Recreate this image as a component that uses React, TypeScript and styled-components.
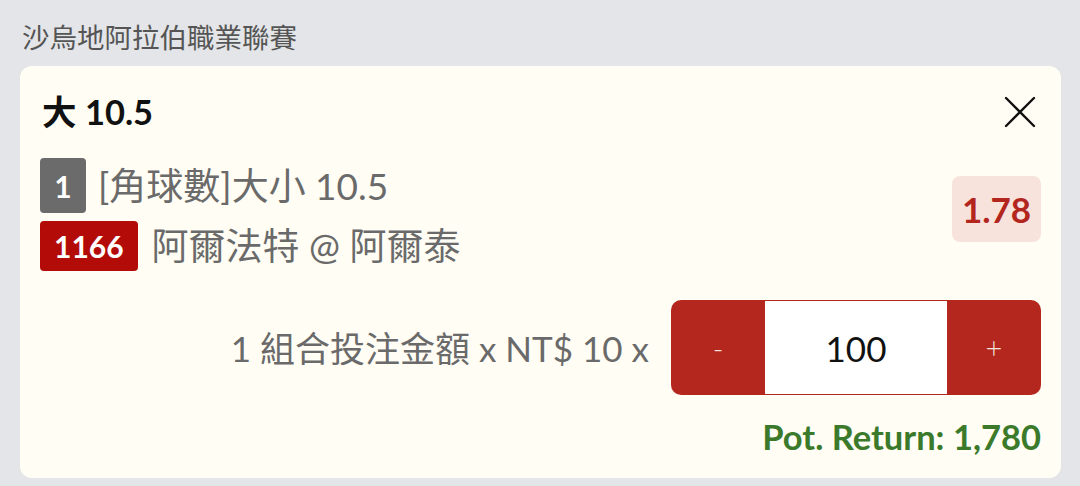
import React from "react";
import styled, { createGlobalStyle } from "styled-components";

const GlobalStyle = createGlobalStyle`
  html, body {
    margin: 0;
    padding: 0;
    background: #e4e5e8;
  }
  body {
    font-family: Lato, "Noto Sans CJK TC", sans-serif;
  }
`;

const Page = styled.div`
  width: 1080px;
  height: 486px;
  box-sizing: border-box;
  padding: 18px 19px 0 20px;
  display: flex;
  flex-direction: column;
  overflow: hidden;
`;

const League = styled.div`
  font-size: 27.5px;
  line-height: 40px;
  color: #555555;
  padding-left: 2px;
  margin-bottom: 8px;
`;

const Card = styled.div`
  background: #fffdf4;
  border-radius: 12px;
  padding: 26px 20px 21px 20px;
  display: flex;
  flex-direction: column;
`;

const TitleRow = styled.div`
  display: flex;
  align-items: center;
  justify-content: space-between;
  height: 40px;
`;

const Title = styled.div`
  font-size: 34.5px;
  line-height: 40px;
  font-weight: 700;
  color: #111111;
  padding-left: 2px;
`;

const CloseButton = styled.button`
  width: 32px;
  height: 32px;
  padding: 0;
  border: none;
  background: transparent;
  display: flex;
  align-items: center;
  justify-content: center;
  margin-right: 5px;
  cursor: pointer;
`;

const Selection = styled.div`
  display: flex;
  align-items: center;
  justify-content: space-between;
  margin-top: 26px;
`;

const Lines = styled.div`
  display: flex;
  flex-direction: column;
  gap: 8px;
`;

const Line = styled.div`
  display: flex;
  align-items: center;
  gap: 12px;
`;

const Badge = styled.span<{ $tone: "gray" | "red" }>`
  display: inline-flex;
  align-items: center;
  justify-content: center;
  box-sizing: border-box;
  height: ${(p) => (p.$tone === "gray" ? "55px" : "50px")};
  min-width: 46px;
  padding: 0 ${(p) => (p.$tone === "gray" ? "0" : "14px")};
  border-radius: 4px;
  background: ${(p) => (p.$tone === "gray" ? "#6b6b6b" : "#b30b07")};
  color: #ffffff;
  font-size: 30px;
  line-height: 1;
  font-weight: 700;
`;

const LineText = styled.span<{ $indent?: number }>`
  font-size: 37px;
  line-height: 44px;
  color: #6a6a6a;
  margin-left: ${(p) => p.$indent ?? 0}px;
  white-space: nowrap;
`;

const Odds = styled.div`
  background: #f7e3dc;
  color: #b3261e;
  font-size: 35px;
  font-weight: 700;
  border-radius: 8px;
  width: 89px;
  height: 66px;
  display: flex;
  align-items: center;
  justify-content: center;
  margin-bottom: 12px;
`;

const StakeRow = styled.div`
  display: flex;
  align-items: center;
  justify-content: flex-end;
  gap: 22px;
  margin-top: 29px;
`;

const StakeLabel = styled.span`
  font-size: 35px;
  line-height: 44px;
  color: #6a6a6a;
  white-space: nowrap;
`;

const Stepper = styled.div`
  display: flex;
  width: 370px;
  height: 95px;
  background: #b3271e;
  border-radius: 10px;
  overflow: hidden;
`;

const StepButton = styled.button`
  width: 94px;
  border: none;
  background: transparent;
  color: #f4e2dc;
  font-family: Lato, sans-serif;
  font-size: 29px;
  font-weight: 300;
  padding: 0;
  cursor: pointer;
`;

const Amount = styled.div`
  flex: 1;
  margin: 1px 0;
  background: #ffffff;
  color: #111111;
  font-size: 35px;
  display: flex;
  align-items: center;
  justify-content: center;
`;

const PotReturn = styled.div`
  margin-top: 22px;
  align-self: flex-end;
  font-size: 34.5px;
  line-height: 40px;
  font-weight: 700;
  color: #3b7a2b;
`;

const CloseIcon = () => (
  <svg width="32" height="32" viewBox="0 0 32 32">
    <path d="M2 2 L30 30 M30 2 L2 30" stroke="#111" strokeWidth="2.4" strokeLinecap="round" fill="none" />
  </svg>
);

export default function App() {
  return (
    <>
      <GlobalStyle />
      <Page>
        <League>沙烏地阿拉伯職業聯賽</League>
        <Card>
          <TitleRow>
            <Title>大 10.5</Title>
            <CloseButton aria-label="close">
              <CloseIcon />
            </CloseButton>
          </TitleRow>
          <Selection>
            <Lines>
              <Line>
                <Badge $tone="gray">1</Badge>
                <LineText>[角球數]大小 10.5</LineText>
              </Line>
              <Line>
                <Badge $tone="red">1166</Badge>
                <LineText $indent={2}>阿爾法特 @ 阿爾泰</LineText>
              </Line>
            </Lines>
            <Odds>1.78</Odds>
          </Selection>
          <StakeRow>
            <StakeLabel>1 組合投注金額 x NT$ 10 x</StakeLabel>
            <Stepper>
              <StepButton>-</StepButton>
              <Amount>100</Amount>
              <StepButton>+</StepButton>
            </Stepper>
          </StakeRow>
          <PotReturn>Pot. Return: 1,780</PotReturn>
        </Card>
      </Page>
    </>
  );
}
